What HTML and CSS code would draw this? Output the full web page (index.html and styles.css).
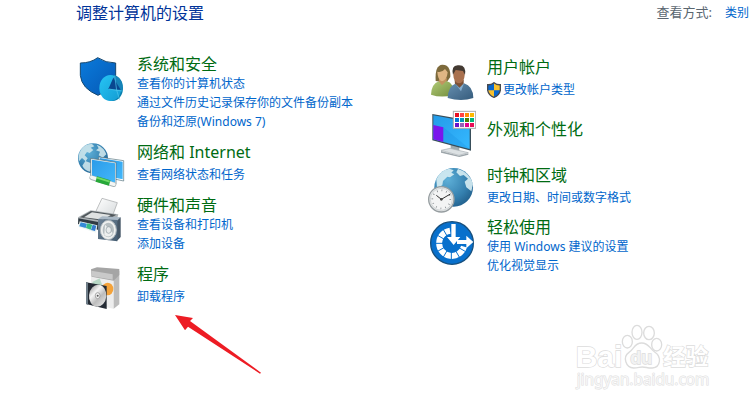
FILE: index.html
```html
<!DOCTYPE html>
<html lang="zh-CN">
<head>
<meta charset="utf-8">
<title>控制面板</title>
<link rel="stylesheet" href="styles.css">
</head>
<body>
<main class="panel">
  <header class="panel-header">
    <h1 class="panel-title">调整计算机的设置</h1>
    <div class="view-by"><span class="view-label">查看方式:</span><a class="link" href="#">类别</a></div>
  </header>

  <div class="columns">
    <div class="column">
      <section class="category">
        <svg class="icon" viewBox="24 12 144 144" aria-hidden="true">
          <defs>
            <linearGradient id="shield" x2="1" y2="1"><stop stop-color="#0a7bdc"/><stop offset="1" stop-color="#0558b4"/></linearGradient>
            <linearGradient id="disc" x2="1" y2="1"><stop stop-color="#27c5f5"/><stop offset="1" stop-color="#129bd2"/></linearGradient>
          </defs>
          <path d="M31 39Q62 39 83 23Q107 39 137 39V76Q135 115 84 136Q35 116 31 76Z" fill="url(#shield)" stroke="#15476f" stroke-width="3"/>
          <ellipse cx="128" cy="114" rx="31" ry="39" fill="#087fad"/>
          <ellipse cx="121" cy="114" rx="33" ry="39" fill="url(#disc)"/>
          <path d="M134 76Q158 85 158 121L118 117Z" fill="#1683b9"/>
          <path d="M130 83L152 119L115 117Z" fill="#084790"/>
          <path d="M134 77L140 121L158 123M117 117L140 121L149 149" fill="none" stroke="#52c8ed" stroke-width="2"/>
        </svg>
        <div class="category-text">
          <h2 class="category-title"><a href="#">系统和安全</a></h2>
          <a class="link" href="#">查看你的计算机状态</a>
          <a class="link" href="#">通过文件历史记录保存你的文件备份副本</a>
          <a class="link" href="#">备份和还原(Windows 7)</a>
        </div>
      </section>

      <section class="category category-single">
        <svg class="icon" viewBox="24 21 144 144" aria-hidden="true">
          <defs>
            <radialGradient id="globe" cx=".35" cy=".3" r=".8"><stop stop-color="#5eb0d8"/><stop offset=".65" stop-color="#347fae"/><stop offset="1" stop-color="#205c88"/></radialGradient>
            <linearGradient id="screen" x2="1" y2="1"><stop stop-color="#2b9be8"/><stop offset="1" stop-color="#43b7fa"/></linearGradient>
          </defs>
          <circle cx="69" cy="70" r="45" fill="url(#globe)"/>
          <path d="M34 43Q46 26 66 27L73 34L62 38L70 45L59 54L51 51L44 61L53 70L47 79L36 69L27 79Q23 57 34 43ZM80 29Q102 37 109 58L98 68L86 61L90 50L78 46L86 40ZM46 78L62 84L67 94L59 110Q43 105 37 92Z" fill="#d3e9ee" opacity=".86"/>
          <path d="M86 66L161 77V138L86 122Z" fill="#fff" stroke="#53727d" stroke-width="2"/>
          <path d="M89 69L158 80V133L89 119Z" fill="url(#screen)"/>
          <path d="M62 70L138 82V148L62 127Z" fill="#e7f3f7" stroke="#526b75" stroke-width="2"/>
          <path d="M66 74L135 85V143L66 124Z" fill="url(#screen)"/>
          <path d="M65 128L132 149" stroke="#a8b3b5" stroke-width="14" stroke-linecap="round"/>
          <path d="M65 127L132 148" stroke="#f4f6f4" stroke-width="10" stroke-linecap="round"/>
          <path d="M79 132L119 144" stroke="#27a839" stroke-width="17"/>
          <path d="M80 128L119 140" stroke="#72db67" stroke-width="5"/>
        </svg>
        <div class="category-text">
          <h2 class="category-title"><a href="#">网络和 Internet</a></h2>
          <a class="link" href="#">查看网络状态和任务</a>
        </div>
      </section>

      <section class="category">
        <svg class="icon" viewBox="24 12 144 144" aria-hidden="true">
          <defs>
            <linearGradient id="paper" x2="1" y2="1"><stop stop-color="#fff"/><stop offset="1" stop-color="#d4d8da"/></linearGradient>
            <linearGradient id="speaker" x2="1" y2="1"><stop stop-color="#6d8295"/><stop offset="1" stop-color="#455d72"/></linearGradient>
          </defs>
          <path d="M78 60L96 22L142 35L126 79Z" fill="url(#paper)" stroke="#a0a3a5" stroke-width="2"/>
          <path d="M24 79L62 58L145 70L139 91L97 111L25 94Z" fill="#adb3b6"/>
          <path d="M30 79L63 60L139 71L105 91Z" fill="#50575b"/>
          <path d="M42 79L66 64L122 72L99 86Z" fill="#dfe2e2"/>
          <path d="M25 82L101 96L96 120L24 99Z" fill="#303b43"/>
          <path d="M29 91L82 103L78 125L25 108Z" fill="#edf6f4"/>
          <path d="M32 94L51 98L47 111L28 106Z" fill="#348bd7"/>
          <path d="M52 97L67 101L62 116L48 111Z" fill="#38bd82"/>
          <path d="M68 101L79 104L75 120L63 117Z" fill="#347ccf"/>
          <path d="M138 83L152 79V138L140 151Z" fill="#455666"/>
          <path d="M84 83L97 76L152 79L141 89Z" fill="#a9b8c5"/>
          <path d="M84 84L142 87V151L84 144Z" fill="url(#speaker)"/>
          <ellipse cx="115" cy="117" rx="24" ry="29" fill="#eef0ef" stroke="#aeb7bc" stroke-width="3"/>
          <ellipse cx="115" cy="117" rx="17" ry="22" fill="#b7bfc2"/>
          <path d="M105 101L128 126Q119 144 103 132Z" fill="#eef0ef"/>
          <ellipse cx="116" cy="117" rx="8" ry="10" fill="#e9ecec" stroke="#8f9ca2" stroke-width="2"/>
        </svg>
        <div class="category-text">
          <h2 class="category-title"><a href="#">硬件和声音</a></h2>
          <a class="link" href="#">查看设备和打印机</a>
          <a class="link" href="#">添加设备</a>
        </div>
      </section>

      <section class="category category-single">
        <svg class="icon" viewBox="24 9 144 144" aria-hidden="true">
          <defs>
            <linearGradient id="cd" x2="1" y2="1"><stop stop-color="#888"/><stop offset=".35" stop-color="#f5f5f5"/><stop offset=".6" stop-color="#bcbcbc"/><stop offset="1" stop-color="#eee"/></linearGradient>
          </defs>
          <path d="M63 29L131 39V143L63 130Z" fill="#ededed"/>
          <path d="M131 39L148 29V130L131 143Z" fill="#bcbcbc"/>
          <path d="M63 25L81 19L148 24V42L131 59L65 47Z" fill="#a5a5a5"/>
          <path d="M64 29L128 40V56L65 46Z" fill="#c9c9c9"/>
          <path d="M67 63L89 52L109 104L76 110Z" fill="#b8d8c6"/>
          <ellipse cx="113" cy="84" rx="17" ry="19" fill="#f4a33b"/>
          <path d="M48 64L110 75V144L48 129Z" fill="#242b34"/>
          <path d="M48 64L54 65V131L48 129Z" fill="#6e7d88"/>
          <ellipse cx="83" cy="104" rx="26" ry="33" fill="url(#cd)" transform="rotate(5 83 104)"/>
          <ellipse cx="83" cy="104" rx="7" ry="9" fill="#f3f3f3" stroke="#888" stroke-width="2"/>
          <circle cx="83" cy="104" r="3" fill="#555"/>
        </svg>
        <div class="category-text">
          <h2 class="category-title"><a href="#">程序</a></h2>
          <a class="link" href="#">卸载程序</a>
        </div>
      </section>
    </div>

    <div class="column column-right">
      <section class="category category-single">
        <svg class="icon" viewBox="9 6 144 144" aria-hidden="true">
          <defs>
            <linearGradient id="green" x2="1" y2="1"><stop stop-color="#b2cc78"/><stop offset="1" stop-color="#738d3d"/></linearGradient>
            <linearGradient id="blue" x2="1" y2="1"><stop stop-color="#668faf"/><stop offset="1" stop-color="#355b7c"/></linearGradient>
          </defs>
          <path d="M32 78Q29 30 52 29Q77 28 76 66L64 83Z" fill="#7d6a3c"/>
          <path d="M43 68H65V90L51 100L40 85Z" fill="#c3935f"/>
          <path d="M37 50Q52 53 60 42L68 52Q66 75 51 79Q38 75 37 50Z" fill="#dfb684"/>
          <path d="M18 119Q20 86 41 79L51 91L64 78Q88 84 86 119Q51 130 18 119Z" fill="url(#green)"/>
          <path d="M89 74H116V92L104 101L90 90Z" fill="#7d5136"/>
          <ellipse cx="102" cy="60" rx="17" ry="25" fill="#a9714f"/>
          <path d="M84 59Q78 32 98 31Q125 28 120 60L114 48L92 45Z" fill="#433a32"/>
          <path d="M68 129Q70 92 91 86L104 98L117 85Q144 93 145 129Q109 141 68 129Z" fill="url(#blue)"/>
          <path d="M91 86L103 99L117 85L108 109Z" fill="#86afd0"/>
        </svg>
        <div class="category-text">
          <h2 class="category-title"><a href="#">用户帐户</a></h2>
          <a class="link link-admin" href="#"><svg class="uac" viewBox="0 0 42 48" aria-hidden="true">
            <path d="M21 2Q30 9 40 8V25Q37 40 21 46Q5 40 2 25V8Q12 9 21 2Z" fill="#f9c12e"/>
            <path d="M21 2V25H2V8Q12 9 21 2ZM21 25H40Q37 40 21 46Z" fill="#0967cf"/>
            <path d="M21 2Q30 9 40 8V25Q37 40 21 46Q5 40 2 25V8Q12 9 21 2Z" fill="none" stroke="#474a50" stroke-width="4"/>
          </svg>更改帐户类型</a>
        </div>
      </section>

      <section class="category category-plain">
        <svg class="icon" viewBox="9 12 144 144" aria-hidden="true">
          <defs><linearGradient id="desktop" x2="1" y2="1"><stop stop-color="#249be9"/><stop offset="1" stop-color="#35b9ff"/></linearGradient></defs>
          <path d="M77 116L103 123V141H77Z" fill="#a0aaae"/>
          <path d="M48 136L75 130L130 143L102 151Z" fill="#dce1e3" stroke="#a7afb3" stroke-width="2"/>
          <path d="M48 138L102 152L130 145V149L103 156L48 143Z" fill="#9ca5aa"/>
          <path d="M22 27L138 47V137L22 106Z" fill="#384e5a"/>
          <path d="M25 31L134 51V132L25 103Z" fill="url(#desktop)"/>
          <path d="M25 60L55 67V111L25 103Z" fill="#7a16ec"/>
          <path d="M55 111V67L134 132Z" fill="#1587db" opacity=".25"/>
          <rect x="85" y="19" width="67" height="51" fill="#fff" stroke="#aaa" stroke-width="3"/>
          <path d="M90 24H102V36H90Z" fill="#e81123"/><path d="M105 24H117V36H105Z" fill="#ff4343"/><path d="M120 24H132V36H120Z" fill="#ff8c00"/><path d="M135 24H147V36H135Z" fill="#ffb900"/>
          <path d="M90 39H102V51H90Z" fill="#0078d7"/><path d="M105 39H117V51H105Z" fill="#0099bc"/><path d="M120 39H132V51H120Z" fill="#498205"/><path d="M135 39H147V51H135Z" fill="#00b779"/>
          <path d="M90 54H102V66H90Z" fill="#6b12c9"/><path d="M105 54H117V66H105Z" fill="#9860b7"/><path d="M120 54H132V66H120Z" fill="#e3008c"/><path d="M135 54H147V66H135Z" fill="#e80c55"/>
        </svg>
        <div class="category-text">
          <h2 class="category-title"><a href="#">外观和个性化</a></h2>
        </div>
      </section>

      <section class="category category-single">
        <svg class="icon" viewBox="9 15 144 144" aria-hidden="true">
          <circle cx="86" cy="82" r="58" fill="url(#globe)"/>
          <path d="M34 58Q45 31 73 26L86 31L79 38L88 43L75 52L67 50L54 63L52 76L36 83ZM99 27Q133 36 144 72L139 94L124 82L119 65L129 56L116 45L105 48L94 37Z" fill="#d7edf3" opacity=".9"/>
          <circle cx="49" cy="118" r="38" fill="#e6e9ea" stroke="#969da0" stroke-width="4"/>
          <circle cx="49" cy="118" r="33" fill="#f3f4f4" stroke="#c2c7c9" stroke-width="2"/>
          <circle cx="49" cy="118" r="27" fill="none" stroke="#767d80" stroke-width="5" stroke-dasharray="2 12.14"/>
          <path d="M34 106L49 118L76 102" fill="none" stroke="#333" stroke-width="3"/>
          <circle cx="49" cy="118" r="4" fill="#444"/>
        </svg>
        <div class="category-text">
          <h2 class="category-title"><a href="#">时钟和区域</a></h2>
          <a class="link" href="#">更改日期、时间或数字格式</a>
        </div>
      </section>

      <section class="category">
        <svg class="icon" viewBox="9 6 144 144" aria-hidden="true">
          <circle cx="81" cy="84" r="64" fill="#0870cc" stroke="#174f7d" stroke-width="4"/>
          <path d="M75 47A38 38 0 1 0 117 95" fill="none" stroke="#fff" stroke-width="18"/>
          <path d="M79 85L54 42M79 85L36 60M79 85H29M79 85L36 110M79 85L54 128M79 85V135M79 85L104 128M79 85L122 110" stroke="#0870cc" stroke-width="3"/>
          <circle cx="80" cy="84" r="27" fill="#0870cc"/>
          <path d="M79 27H92V66H106L86 90L66 66H79Z" fill="#fff"/>
          <path d="M96 75H124V62L145 81L124 100V87H96Z" fill="#fff"/>
        </svg>
        <div class="category-text">
          <h2 class="category-title"><a href="#">轻松使用</a></h2>
          <a class="link" href="#">使用 Windows 建议的设置</a>
          <a class="link" href="#">优化视觉显示</a>
        </div>
      </section>
    </div>
  </div>

  <svg class="arrow" viewBox="0 0 264 180" aria-hidden="true">
    <path d="M3 3L57 12L48 21L261 176L258 179L42 38L33 49Z" fill="#ed1c24"/>
  </svg>

  <svg class="watermark" viewBox="0 0 576 273" role="img" aria-label="Baidu 经验">
    <g class="mark-outline">
      <ellipse cx="202" cy="80" rx="15" ry="19"/>
      <ellipse cx="231" cy="52" rx="15" ry="21"/>
      <ellipse cx="267" cy="54" rx="16" ry="20"/>
      <ellipse cx="290" cy="89" rx="15" ry="19"/>
      <path d="M245 84C222 84 222 103 207 112C187 126 197 158 221 159C234 159 239 156 247 156C258 156 264 160 277 159C303 156 305 125 284 111C269 101 267 84 245 84Z"/>
      <text class="mark-bai" x="47" y="155">Bai</text>
      <text class="mark-du" x="211" y="147">du</text>
      <text class="mark-cn" x="309" y="150">经验</text>
    </g>
    <text class="mark-url" x="50" y="209">jingyan.baidu.com</text>
  </svg>
</main>
</body>
</html>
```
FILE: styles.css
```css
* {
  box-sizing: border-box;
}

body {
  margin: 0;
  background: #fff;
  font-family: "Noto Sans", "Noto Sans CJK SC", sans-serif;
  font-size: 12px;
  line-height: 19px;
}

a {
  color: inherit;
  text-decoration: none;
}

a:hover {
  text-decoration: underline;
}

.panel {
  position: relative;
  min-height: 100vh;
  padding: 3px 3px 0 76px;
}

.panel-header {
  display: flex;
  justify-content: space-between;
  align-items: flex-start;
  margin-bottom: 31px;
}

.panel-title {
  margin: 0;
  color: #003399;
  font-size: 16px;
  font-weight: 400;
  line-height: 20px;
}

.view-by {
  display: flex;
  gap: 13px;
}

.view-label {
  color: #5a6670;
  font-size: 13px;
}

.link {
  color: #0066cc;
}

.columns {
  display: grid;
  grid-template-columns: 12fr 11fr;
  padding-left: 2px;
}

.column {
  display: flex;
  flex-direction: column;
  gap: 11px;
}

.column-right {
  gap: 10px;
  padding-top: 3px;
}

.category {
  display: flex;
  align-items: flex-start;
  gap: 11px;
}

.icon {
  flex: none;
  width: 48px;
  height: 48px;
  margin-bottom: -8px;
}

.category-text {
  display: flex;
  flex-direction: column;
  align-items: flex-start;
}

.category-title {
  margin: 0;
  color: #006b12;
  font-size: 16px;
  font-weight: 400;
  line-height: 20px;
}

.category-single .category-title {
  margin-bottom: 3px;
}

.category-plain {
  min-height: 46px;
}

.category-plain .category-text {
  padding-top: 10px;
}

.link-admin {
  display: flex;
  align-items: center;
  gap: 2px;
}

.uac {
  width: 14px;
  height: 16px;
}

.arrow {
  position: absolute;
  top: 314px;
  left: 174px;
  width: 88px;
  height: 60px;
}

.watermark {
  position: absolute;
  right: 0;
  bottom: 0;
  width: 192px;
  height: 91px;
}

.mark-outline {
  fill: #fff;
  stroke: #dcdcdc;
  stroke-width: 4px;
}

.mark-outline text {
  paint-order: stroke;
}

.mark-bai {
  font: 700 90px "Liberation Sans", sans-serif;
}

.mark-outline .mark-du {
  fill: #f2f2f2;
  font: 700 54px "Liberation Sans", sans-serif;
}

.mark-cn {
  font: 700 68px "Noto Sans CJK SC", sans-serif;
}

.mark-url {
  fill: #f6f6f6;
  stroke: #dedede;
  stroke-width: 3px;
  paint-order: stroke;
  font: 400 46px "Noto Sans", sans-serif;
}
```
